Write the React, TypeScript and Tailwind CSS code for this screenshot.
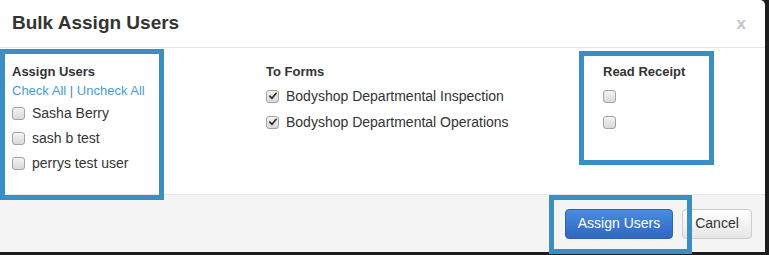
import React from 'react';

// Old-style (Win/Chrome) checkbox drawn with spans
function Box({ checked = false }: { checked?: boolean }) {
  return (
    <span className="relative inline-flex h-[13px] w-[13px] shrink-0 items-center justify-center rounded-[3px] border border-[#a3a3a3] bg-gradient-to-b from-[#f3f3f3] to-[#d9d9d9]">
      {checked && (
        <svg viewBox="0 0 12 12" className="h-[10px] w-[10px]">
          <path d="M2.2 6.2 L4.8 8.8 L9.8 2.8" fill="none" stroke="#2b2b2b" strokeWidth="2" strokeLinecap="round" strokeLinejoin="round" />
        </svg>
      )}
    </span>
  );
}

function Row({ label, checked, gap = 'h-[25px]' }: { label?: string; checked?: boolean; gap?: string }) {
  return (
    <div className={`flex items-center ${gap}`}>
      <Box checked={checked} />
      {label && <span className="ml-[7px] text-[14px] text-[#333]">{label}</span>}
    </div>
  );
}

const users = ['Sasha Berry', 'sash b test', 'perrys test user'];
const forms = ['Bodyshop Departmental Inspection', 'Bodyshop Departmental Operations'];

export default function App() {
  return (
    <div className="relative h-[255px] w-[769px] overflow-hidden bg-[#1d1d1d] font-['Liberation_Sans',Arial,sans-serif]">
      <div className="flex h-[252px] w-[765px] flex-col rounded-tr-[5px] bg-white">
        {/* Header */}
        <div className="flex h-[48px] shrink-0 items-center justify-between border-b border-[#e5e5e5] pl-[12px] pr-[19px]">
          <h4 className="text-[19px] font-bold text-[#333]">Bulk Assign Users</h4>
          <span className="text-[17px] font-bold text-[#c4c4c4]">x</span>
        </div>

        {/* Body */}
        <div className="flex h-[146px] shrink-0 pl-[12px] pt-[15px]">
          <div className="w-[254px]">
            <div className="text-[13px] font-bold leading-[18px] text-[#333]">Assign Users</div>
            <div className="text-[13px] leading-[20px] text-[#4b9bd6]">
              Check All <span className="text-[#5a7fa0]">|</span> Uncheck All
            </div>
            {users.map((u) => (
              <Row key={u} label={u} />
            ))}
          </div>
          <div className="w-[337px]">
            <div className="text-[13px] font-bold leading-[18px] text-[#333]">To Forms</div>
            <div className="h-[2px]" />
            {forms.map((f) => (
              <Row key={f} label={f} checked gap="h-[26px]" />
            ))}
          </div>
          <div>
            <div className="text-[13px] font-bold leading-[18px] text-[#333]">Read Receipt</div>
            <div className="h-[2px]" />
            <Row gap="h-[26px]" />
            <Row gap="h-[26px]" />
          </div>
        </div>

        {/* Footer */}
        <div className="flex flex-1 items-center justify-end gap-[9px] border-t border-[#e5e5e5] bg-[#f4f4f4] pr-[13px]">
          <button className="h-[30px] w-[108px] rounded-[4px] border border-[#2c62b5] bg-gradient-to-b from-[#4b8cdb] to-[#2f66c3] text-[14px] text-white">
            Assign Users
          </button>
          <button className="h-[30px] w-[70px] rounded-[4px] border border-[#cccccc] bg-gradient-to-b from-white to-[#e6e6e6] text-[14px] text-[#333]">
            Cancel
          </button>
        </div>
      </div>

      {/* Annotation boxes */}
      <div className="pointer-events-none absolute left-0 top-[49px] h-[151px] w-[164px] border-[5px] border-[#3a8ec6]" />
      <div className="pointer-events-none absolute left-[579px] top-[51px] h-[114px] w-[135px] border-[5px] border-[#3a8ec6]" />
      <div className="pointer-events-none absolute left-[549px] top-[195px] h-[59px] w-[143px] border-[5px] border-[#3a8ec6]" />
    </div>
  );
}
